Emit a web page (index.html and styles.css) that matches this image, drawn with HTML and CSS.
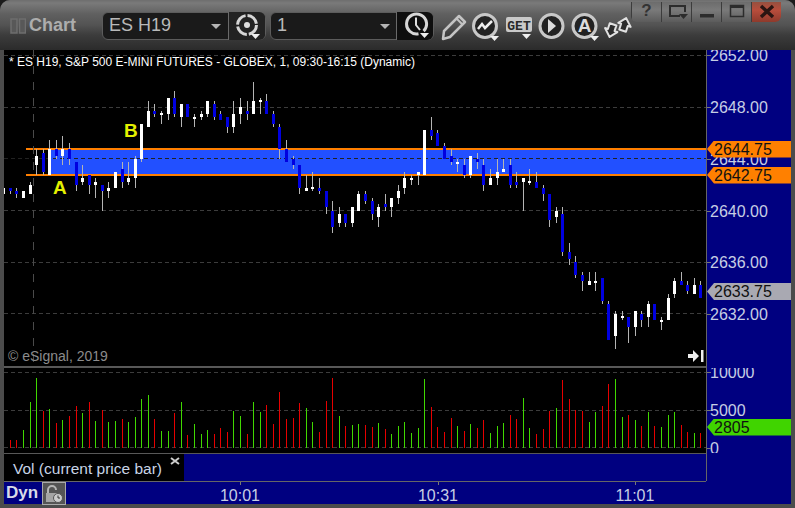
FILE: index.html
```html
<!DOCTYPE html>
<html lang="en">
<head>
<meta charset="utf-8">
<title>Chart</title>
<link rel="stylesheet" href="styles.css">
</head>
<body>
<div class="window">
  <header class="titlebar">
    <svg class="grip" viewBox="0 0 16 16"><rect x="1" y="1" width="6" height="14"/><rect x="9.500" y="1" width="6" height="14"/></svg>
    <span class="app-name">Chart</span>
    <div class="combo combo-symbol">
      <span class="combo-value">ES H19</span>
      <i class="caret"></i>
      <span class="combo-btn">
        <svg viewBox="0 0 36 28" width="36" height="28"><circle cx="18" cy="13" r="9.500" class="ring" stroke-dasharray="13 2"/><circle cx="18" cy="13" r="3" fill="#ddd"/><path d="M22 22h9l-4.500 5z" fill="#eee"/></svg>
      </span>
    </div>
    <div class="combo combo-interval">
      <span class="combo-value">1</span>
      <i class="caret"></i>
      <span class="combo-btn combo-btn-dark">
        <svg viewBox="0 0 37 28" width="37" height="28"><path d="M26.600 19.100A10 10 0 1 0 21.500 21.800" class="ring"/><path d="M19 5.500V13l4 5" fill="none" stroke="#ddd" stroke-width="2"/><path d="M23 21h9l-4.500 5z" fill="#eee"/></svg>
      </span>
    </div>
    <div class="tools">
      <svg class="tool" viewBox="0 0 33 30"><path d="M7 28l1-8L23 5l6 6L14 26z" fill="none" stroke="#c4c4c4" stroke-width="2.500" stroke-linejoin="round"/><path d="M21 8l5 5" stroke="#c4c4c4" stroke-width="2"/></svg>
      <svg class="tool" viewBox="0 0 33 30"><circle cx="16" cy="15" r="11.500" class="disc"/><path d="M9 18l4-5 3 4 7-7" fill="none" stroke="#eee" stroke-width="2.500"/><path d="M21 25h9l-4.500 5z" fill="#eee"/></svg>
      <svg class="tool" viewBox="0 0 33 30"><rect x="4" y="6" width="26" height="15" rx="2" fill="#c9c9c9"/><text x="17" y="19" class="get-text">GET</text><path d="M20 23h9l-4.500 5z" fill="#eee"/></svg>
      <svg class="tool" viewBox="0 0 33 30"><circle cx="16.500" cy="15" r="11.500" class="disc"/><path d="M13 8l8 7-8 7z" fill="#ddd"/></svg>
      <svg class="tool" viewBox="0 0 33 30"><circle cx="16.500" cy="15" r="11.500" class="disc"/><text x="16.500" y="21" class="a-text">A</text><path d="M22 25h9l-4.500 5z" fill="#eee"/></svg>
      <svg class="tool" viewBox="0 0 33 30"><g transform="rotate(18 17 16)"><path d="M22 5l7 7h-3v6h-7v-6h-3z" class="swap"/><path d="M12 28l-7-7h3v-6h7v6h3z" class="swap"/></g></svg>
    </div>
    <div class="win-controls">
      <span class="win-btn win-help">?</span>
      <span class="win-btn"><svg viewBox="0 0 30 19" width="30" height="19"><path d="M18 14H8V4h15v6" fill="none" stroke="#2c2c2c" stroke-width="2"/><path d="M17 12h9l-4.500 5z" fill="#2c2c2c"/></svg></span>
      <span class="win-btn"><svg viewBox="0 0 30 19" width="30" height="19"><rect x="8" y="12" width="14" height="3.500" fill="#2c2c2c"/></svg></span>
      <span class="win-btn"><svg viewBox="0 0 30 19" width="30" height="19"><rect x="8.500" y="3.500" width="13" height="11" fill="none" stroke="#2c2c2c" stroke-width="1.500"/><rect x="8" y="3" width="14" height="3" fill="#2c2c2c"/></svg></span>
      <span class="win-btn win-close"><svg viewBox="0 0 30 19" width="30" height="19"><path d="M9 4l12 11M21 4L9 15" stroke="#2a1512" stroke-width="3.500"/></svg></span>
    </div>
  </header>

  <div class="workspace">
    <div class="chart-row">
      <div class="panes">
        <div class="price-pane">
          <svg id="price-plot" class="plot" viewBox="4 50 702 316" width="702" height="316">
            <g id="price-grid"></g>
            <rect x="49" y="149" width="657" height="26" fill="#2250ff"/>
            <path d="M26 149H706M26 175H706" stroke="#ff7f00" stroke-width="2"/>
            <path d="M4 158.500H706" class="band-line"/>
            <path d="M33.500 50V366" class="cross-line"/>
            <g id="candles"></g>
            <text x="53" y="194" class="marker">A</text>
            <text x="124" y="137" class="marker">B</text>
          </svg>
          <div class="study-title">* ES H19, S&amp;P 500 E-MINI FUTURES - GLOBEX, 1, 09:30-16:15 (Dynamic)</div>
          <div class="copyright">© eSignal, 2019</div>
          <svg class="jump" viewBox="0 0 16 12" width="16" height="12"><path d="M0 4h5V0l6 6-6 6V8H0z" fill="#eee"/><rect x="13" y="0" width="2.500" height="12" fill="#eee"/></svg>
        </div>
        <div class="vol-pane">
          <svg id="vol-plot" class="plot" viewBox="4 368 702 85" width="702" height="85"></svg>
        </div>
        <div class="legend-row">
          <div class="legend">
            <span class="legend-text">Vol (current price bar)</span>
            <svg class="legend-close" viewBox="0 0 10 8" width="10" height="8"><path d="M1 1l8 6M9 1L1 7" stroke="#ccc" stroke-width="2"/></svg>
          </div>
        </div>
      </div>
      <div class="scale">
        <div id="price-scale" class="price-scale"></div>
        <div id="vol-scale" class="vol-scale"></div>
      </div>
    </div>
    <footer class="time-axis">
      <div class="axis-track">
        <span class="dyn">Dyn</span>
        <span class="lock"><svg viewBox="0 0 22 22" width="22" height="22"><path d="M5 11V7a4 4 0 0 1 8 0" fill="none" stroke="#b5b5b5" stroke-width="2"/><rect x="3" y="10" width="11" height="9" fill="#a5a5a5"/><circle cx="15" cy="15" r="4.500" fill="#ccc" stroke="#555"/><path d="M15 12.500V15h2" fill="none" stroke="#333"/></svg></span>
        <div id="times"></div>
      </div>
    </footer>
  </div>
</div>
<script src="chart.js"></script>
</body>
</html>
```
FILE: styles.css
```css
* { box-sizing: border-box; }
html, body { margin: 0; padding: 0; background: #1c1c1c; }
body { width: 795px; height: 508px; overflow: hidden; font-family: "Liberation Sans", Arial, sans-serif; }

.window { width: 795px; height: 508px; display: flex; flex-direction: column; background: #4c4c4c; border-radius: 10px 10px 0 0; overflow: hidden; }

/* title bar */
.titlebar { position: relative; height: 50px; flex: none; display: flex; align-items: center; padding: 1px 0 0 10px;
  background: linear-gradient(#6e6e6e 0, #7a7a7a 3px, #606060 14px, #535353 25px, #3c3c3c 35px, #2b2b2b 50px); }
.grip { width: 16px; height: 16px; flex: none; }
.grip rect { fill: #585858; stroke: #6e6e6e; stroke-width: 1.500; }
.app-name { width: 59px; margin-left: 3px; font-size: 18px; font-weight: 700; color: #adadad; }
.combo { height: 28px; display: flex; align-items: center; background: #1a1a1a; border: 1px solid #5c5c5c; border-radius: 6px; position: relative; }
.combo-symbol { width: 164px; margin-left: 14px; }
.combo-interval { width: 164px; margin-left: 4px; }
.combo-value { margin-left: 6px; font-size: 18px; color: #b9b9b9; }
.caret { position: absolute; border-style: solid; border-width: 5px 5px 0; border-color: #b5b5b5 transparent transparent; top: 11px; }
.combo-symbol .caret { left: 108px; }
.combo-interval .caret { left: 109px; }
.combo-btn { position: absolute; right: 0; top: -1px; height: 28px; width: 37px; border-left: 1px solid #6a6a6a; background: #222; border-radius: 0 6px 6px 0; }
.combo-btn-dark { background: #0e0e0e; }
.combo-btn svg { display: block; }
.ring { fill: none; stroke: #d6d6d6; stroke-width: 3; }
.tools { display: flex; margin-left: 2px; }
.tool { width: 33px; height: 30px; flex: none; }
.disc { fill: #222; stroke: #c8c8c8; stroke-width: 3; }
.get-text { font: 700 13px "Liberation Mono", monospace; fill: #2a2a2a; text-anchor: middle; }
.a-text { font: 700 19px "Liberation Sans", sans-serif; fill: #dcdcdc; text-anchor: middle; }
.swap { fill: #2c2c2c; stroke: #e2e2e2; stroke-width: 2; stroke-linejoin: round; }

.win-controls { position: absolute; top: 2px; left: 631px; display: flex; height: 20px; border-radius: 0 0 6px 6px; overflow: hidden; }
.win-btn { width: 30px; height: 20px; display: block; border-left: 1px solid #3c3c3c; background: linear-gradient(#6c6c6c, #7a7a7a 40%, #5c5c5c); }
.win-btn svg { display: block; }
.win-help { font-size: 17px; font-weight: 700; line-height: 18px; text-align: center; color: #333; }
.win-close { background: linear-gradient(#96503f, #b84d3c 40%, #8e3a2c); }

/* chart */
.workspace { flex: 1; display: flex; flex-direction: column; padding: 0 4px 4px; }
.chart-row { display: flex; height: 431px; flex: none; }
.panes { width: 703px; flex: none; display: flex; flex-direction: column; border-right: 1px solid #666; }
.price-pane { position: relative; height: 316px; flex: none; background: #000; }
.plot { display: block; }
.vol-pane { height: 87px; flex: none; border-top: 2px solid #585858; background: #000; }
.legend-row { flex: 1; border-top: 1px solid #585858; background: #000080; }
.legend { width: 180px; height: 100%; background: #000; position: relative; }
.legend-text { position: absolute; left: 9px; top: 6px; font-size: 15.500px; color: #c8d4e6; white-space: nowrap; }
.legend-close { position: absolute; right: 4px; top: 3px; }
.grid-line { stroke: #3c3c3c; stroke-width: 1; stroke-dasharray: 4 3; fill: none; }
.band-line { stroke: #222; stroke-width: 1; stroke-dasharray: 4 3; fill: none; }
.cross-line { stroke: #4a4a4a; stroke-width: 1; stroke-dasharray: 8 8; fill: none; }
.marker { font-size: 19px; font-weight: 700; fill: #e4f000; }
.study-title { position: absolute; left: 5px; top: 5px; font-size: 12px; line-height: 15px; color: #fff; white-space: nowrap; }
.copyright { position: absolute; left: 4px; top: 298px; font-size: 14px; color: #8c8c8c; white-space: nowrap; }
.jump { position: absolute; right: 2px; top: 300px; }

/* right scale */
.scale { flex: 1; background: #000080; display: flex; flex-direction: column; }
.price-scale { position: relative; height: 316px; flex: none; overflow: hidden; }
.vol-scale { position: relative; height: 85px; margin-top: 2px; flex: none; overflow: hidden; }
.tick { position: absolute; left: 3px; height: 18px; margin-top: -8px; font-size: 16px; line-height: 18px; color: #c6cee4; white-space: nowrap; }
.tick::before { content: ""; position: absolute; left: -3px; top: 8px; width: 4px; height: 1px; background: #777; }
.tag { position: absolute; left: 0; width: 84px; height: 17px; margin-top: -8.500px; padding-left: 7px; font-size: 16px; line-height: 17px; color: #111; white-space: nowrap;
  clip-path: polygon(0 50%, 7px 0, 100% 0, 100% 100%, 7px 100%); }
.tag-orange { background: #ff8000; }
.tag-grey { background: #a9a9b2; }
.tag-green { background: #40d400; }

/* time axis */
.time-axis { flex: 1; background: #000080; }
.axis-track { position: relative; width: 702px; height: 100%; border-top: 1px solid #666; display: flex; align-items: center; }
.dyn { margin-left: 2px; font-size: 17px; font-weight: 700; color: #d8dce8; }
.lock { position: absolute; left: 38px; top: 0; width: 24px; height: 23px; border: 1px solid #aaa; background: #555; }
.lock svg { display: block; }
.time { position: absolute; top: 5px; width: 60px; margin-left: -30px; text-align: center; font-size: 16px; line-height: 18px; color: #c6cee4; }
.time::before { content: ""; position: absolute; left: 30px; top: -5px; width: 1px; height: 3px; background: #777; }
```
FILE: chart.js
```js
// [wickTop, wickBottom, bodyTop, bodyBottom, up] in page pixels, one row per 1-minute bar
var W = 1, B = 0;
var bars = [
[188,194,188,194,W],[188,194,188,191,B],[188,198,191,194,B],[191,198,191,198,W],[182,194,185,194,W],
[149,175,156,165,W],[149,175,153,172,B],[140,175,149,175,W],[140,159,149,156,B],[136,165,149,156,W],
[143,165,149,159,B],[162,191,162,185,B],[165,185,178,182,W],[175,194,175,185,B],[178,198,182,185,W],
[185,211,185,191,B],[182,198,188,191,W],[172,188,172,188,W],[162,188,169,182,B],[162,185,178,182,W],
[156,188,159,178,W],[124,162,124,159,W],[101,127,111,127,W],[104,117,111,114,B],[111,124,113,115,W],
[98,120,98,114,W],[91,117,98,114,B],[104,127,104,117,W],[104,117,104,117,B],[114,127,117,119,W],
[111,120,114,117,W],[101,117,101,114,W],[101,120,104,117,B],[111,120,114,120,B],[117,133,117,127,B],
[101,133,114,127,W],[98,124,107,114,W],[101,120,111,114,B],[82,114,101,114,W],[98,114,100,102,W],
[94,114,101,114,B],[111,127,114,124,B],[124,159,127,149,B],[140,162,149,162,B],[156,169,159,165,B],
[165,194,165,188,B],[175,191,188,191,W],[172,191,187,189,W],[178,194,188,191,B],[191,214,191,207,B],
[201,233,211,227,B],[207,227,214,223,W],[214,227,214,223,B],[207,227,207,223,W],[191,211,194,211,W],
[191,204,194,201,B],[198,220,201,214,B],[204,227,207,217,W],[194,211,204,207,B],[198,217,198,207,W],
[185,204,191,198,W],[172,194,178,188,W],[175,185,178,180,W],[172,185,172,175,W],[130,175,130,175,W],
[117,140,130,136,B],[130,146,133,146,B],[143,159,146,159,B],[149,165,156,162,B],[159,172,162,164,W],
[159,178,165,175,B],[156,178,156,175,W],[153,169,159,162,B],[159,191,165,185,B],[169,185,178,185,W],
[159,185,172,178,W],[159,172,169,172,W],[159,188,165,185,B],[172,188,182,185,B],[178,211,178,182,W],
[169,185,181,183,W],[172,188,182,188,B],[185,201,188,194,B],[194,227,194,220,B],[207,223,211,217,W],
[207,256,214,252,B],[243,265,252,259,B],[256,278,262,275,B],[272,291,275,281,B],[272,285,281,285,W],
[272,291,281,283,W],[278,304,278,301,B],[301,340,304,340,B],[311,349,314,336,W],[311,320,316,318,W],
[317,343,317,327,B],[311,336,311,327,W],[311,327,314,320,B],[301,327,304,317,W],[304,320,304,320,B],
[317,330,320,322,W],[294,320,298,320,W],[278,298,281,294,W],[272,285,281,285,B],[281,294,285,291,B],
[278,294,285,294,W],[281,298,285,298,B]
];

// volume height in pixels, positive = up bar (green), negative = down bar (red); first bar has none
var volumes = [0,
-8,-8,18,46,70,-37,39,-25,28,-32,-42,35,-46,27,-38,26,27,-29,26,31,49,53,-29,17,17,-35,46,-13,24,14,18,-14,-20,-16,37,32,-14,46,36,-43,
-24,-56,-29,-30,-45,40,26,-16,-47,-70,32,-22,23,24,-23,-21,25,-19,14,22,26,15,20,69,-41,-21,-16,-30,22,-17,24,-20,-28,15,22,25,-33,-29,50,
20,-14,-19,-37,40,-68,-49,-38,-37,26,36,-42,-64,69,31,-33,28,-22,36,-22,21,33,36,-23,-16,15,-15
];

var SVGNS = "http://www.w3.org/2000/svg";

function rect(parent, x, y, w, h, fill) {
  var r = document.createElementNS(SVGNS, "rect");
  r.setAttribute("x", x);
  r.setAttribute("y", y);
  r.setAttribute("width", w);
  r.setAttribute("height", h);
  r.setAttribute("fill", fill);
  r.setAttribute("shape-rendering", "crispEdges");
  parent.appendChild(r);
}

function line(parent, y, x2) {
  var p = document.createElementNS(SVGNS, "path");
  p.setAttribute("d", "M4 " + y + "H" + x2);
  p.setAttribute("class", "grid-line");
  parent.appendChild(p);
}

function barX(i) { return Math.floor(3.7 + 6.578 * i); }

var candles = document.getElementById("candles");
bars.forEach(function (b, i) {
  var x = barX(i);
  rect(candles, x, b[0], 1, b[1] - b[0], "#b4b4b4");
  rect(candles, x - 1, b[2], 3, b[3] - b[2], b[4] ? "#ffffff" : "#0000e0");
});

var grid = document.getElementById("price-grid");
[55.5, 107.5, 210.5, 262.5, 313.5].forEach(function (y) { line(grid, y, 706); });

var volPlot = document.getElementById("vol-plot");
[372.5, 410.5, 447.5].forEach(function (y) { line(volPlot, y, 706); });
volumes.forEach(function (v, i) {
  if (!v) return;
  var h = Math.abs(v);
  rect(volPlot, barX(i), 448 - h, 1, h, v > 0 ? "#40d800" : "#e60000");
});

function label(container, cls, text, y) {
  var el = document.createElement("div");
  el.className = cls;
  el.textContent = text;
  el.style.top = y + "px";
  container.appendChild(el);
}

var priceScale = document.getElementById("price-scale");
[["2652.00", 55], ["2648.00", 107], ["2644.00", 159], ["2640.00", 211], ["2636.00", 262], ["2632.00", 314]]
  .forEach(function (t) { label(priceScale, "tick", t[0], t[1] - 50); });
label(priceScale, "tag tag-orange", "2644.75", 99);
label(priceScale, "tag tag-orange", "2642.75", 125);
label(priceScale, "tag tag-grey", "2633.75", 241.5);

var volScale = document.getElementById("vol-scale");
[["10000", 372], ["5000", 410], ["0", 448]].forEach(function (t) { label(volScale, "tick", t[0], t[1] - 368); });
label(volScale, "tag tag-green", "2805", 59);

var times = document.getElementById("times");
[["10:01", 236], ["10:31", 434], ["11:01", 631]].forEach(function (t) {
  var el = document.createElement("div");
  el.className = "time";
  el.textContent = t[0];
  el.style.left = t[1] + "px";
  times.appendChild(el);
});
```
